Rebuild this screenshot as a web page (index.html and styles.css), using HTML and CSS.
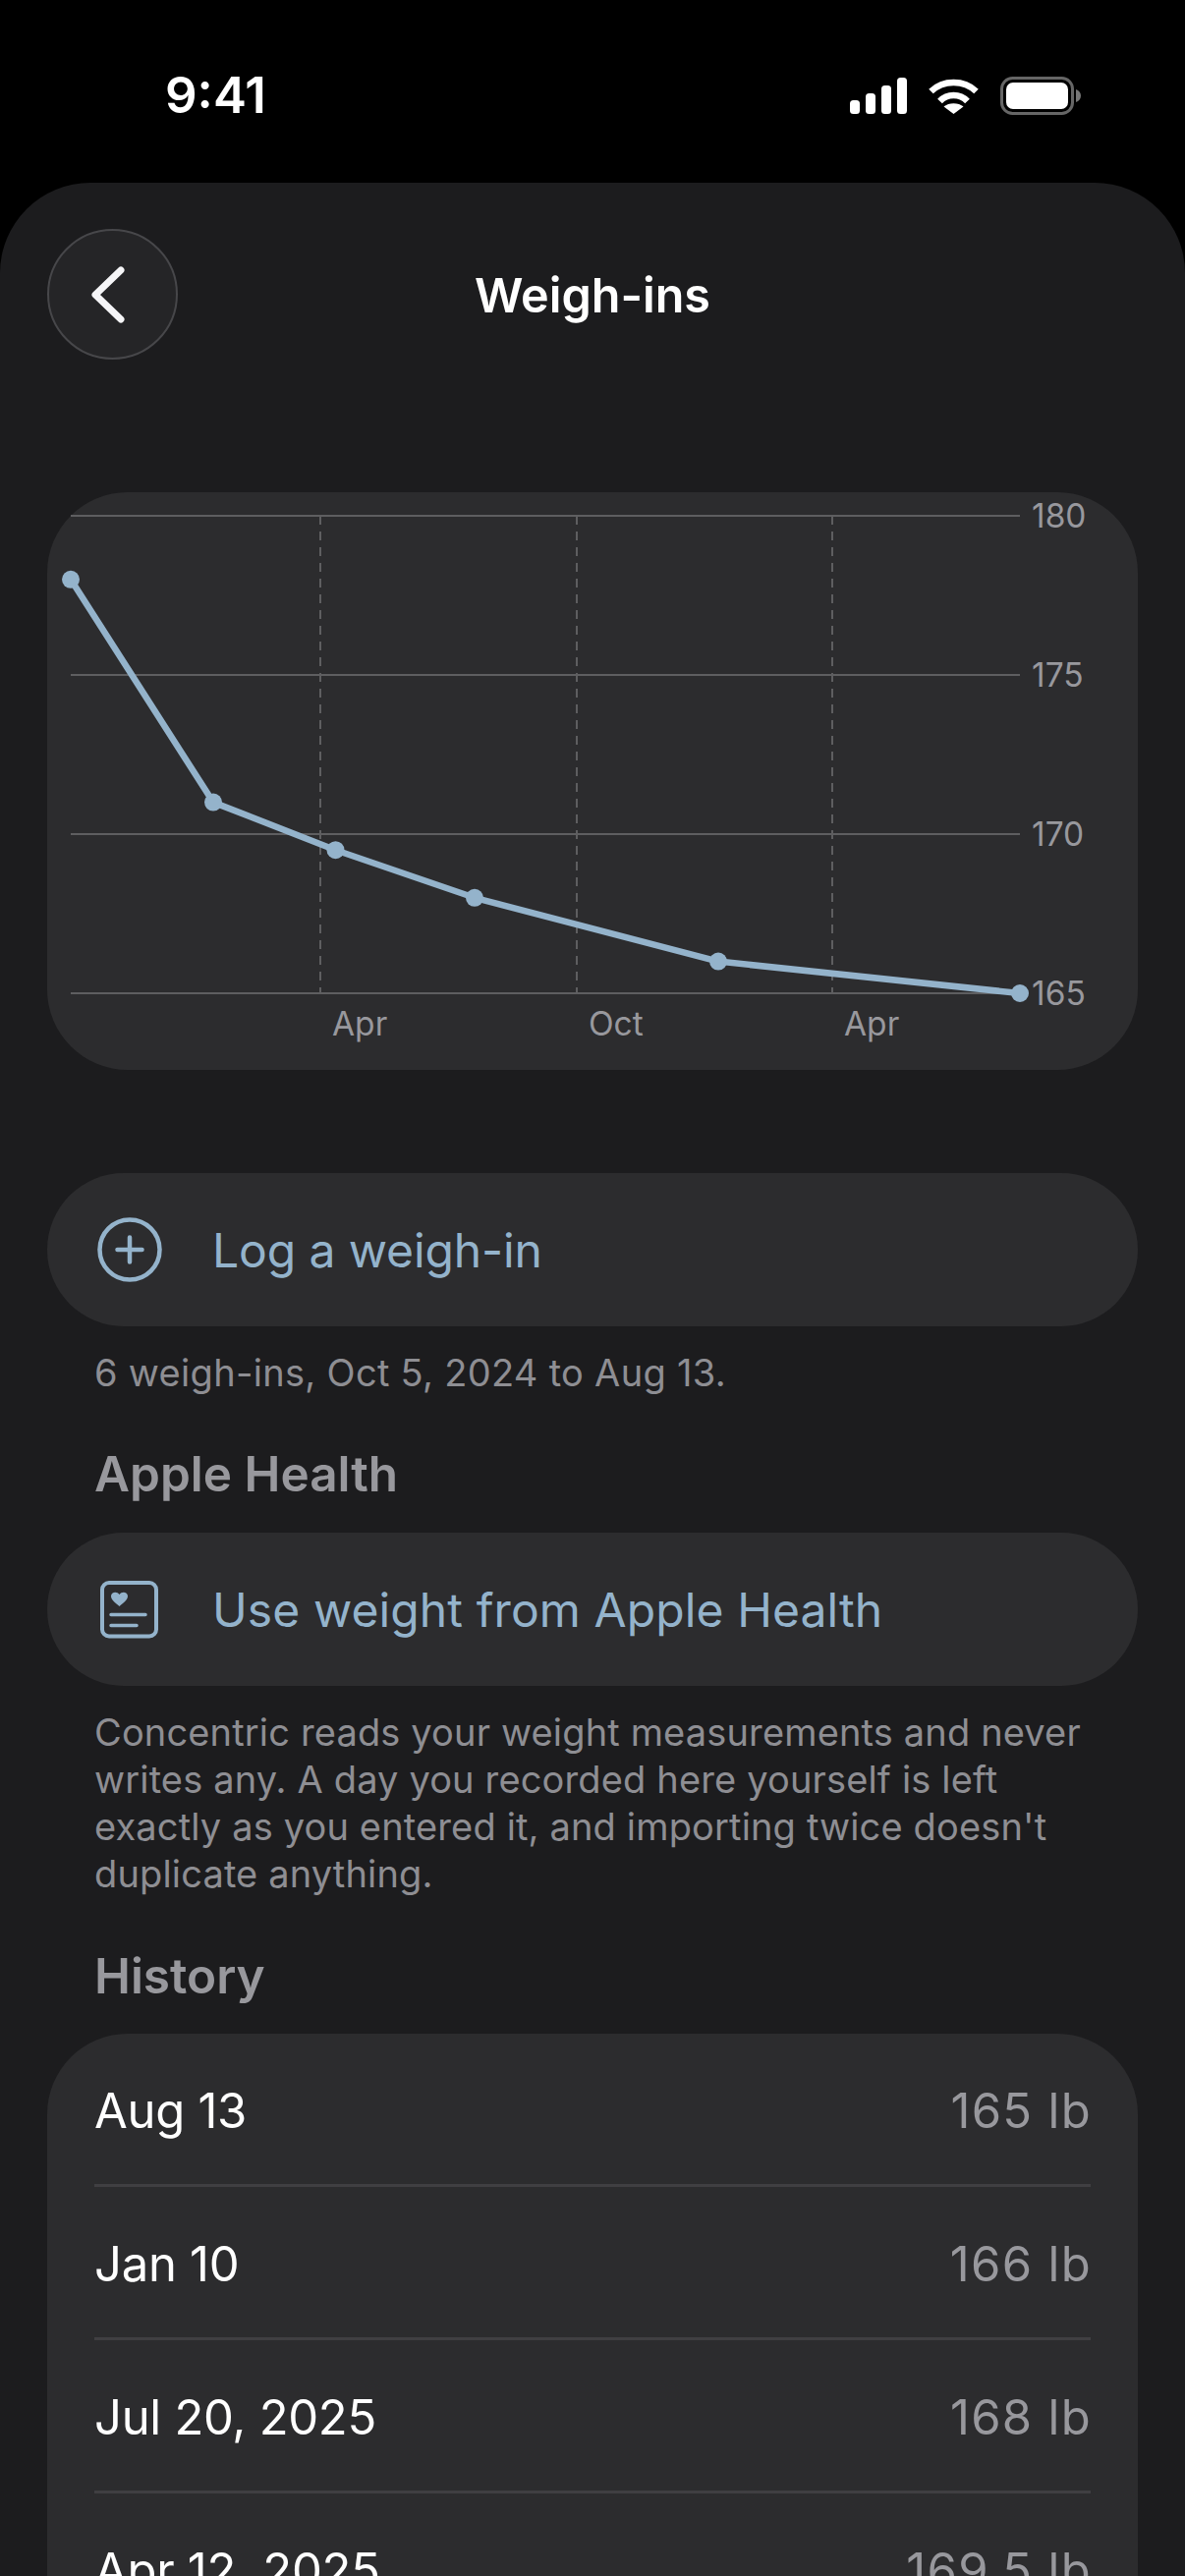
FILE: index.html
```html
<!DOCTYPE html>
<html lang="en">
<head>
<meta charset="utf-8">
<title>Weigh-ins</title>
<link rel="stylesheet" href="styles.css">
</head>
<body>
<div class="phone">
  <header class="status">
    <span class="time">9:41</span>
    <div class="status-icons">
      <svg class="ic-signal" width="58" height="37" viewBox="0 0 58 37" fill="#fff"><rect x="0" y="23" width="10" height="14" rx="3.500"/><rect x="16" y="16" width="10" height="21" rx="3.500"/><rect x="32" y="8" width="10" height="29" rx="3.500"/><rect x="48" y="0" width="10" height="37" rx="3.500"/></svg>
      <svg class="ic-wifi" width="51" height="37" viewBox="0 0 51 37" fill="none" stroke="#fff" stroke-width="6.500"><path d="M2.500 14C15 2 36 2 48.500 14"/><path d="M11.500 24C19 16 32 16 39.500 24"/><path d="M25.500 37L15.500 29.500C20.500 25 30.500 25 35.500 29.500Z" fill="#fff" stroke="none"/></svg>
      <svg class="ic-batt" width="82" height="39" viewBox="0 0 82 39" fill="none"><rect x="1.500" y="1.500" width="72" height="36" rx="11" stroke="#666" stroke-width="3"/><rect x="6" y="6" width="63" height="27" rx="7" fill="#fff"/><path d="M77 13C80 14 82 16.500 82 19.500C82 22.500 80 25 77 26Z" fill="#777"/></svg>
    </div>
  </header>
  <main class="sheet">
    <div class="nav">
      <button class="back" type="button" aria-label="Back">
        <svg width="40" height="60" viewBox="0 0 40 60" fill="none" stroke="#f5f5f7" stroke-width="7" stroke-linecap="round" stroke-linejoin="round"><path d="M33 5L7 30L33 55"/></svg>
      </button>
      <h1 class="title">Weigh-ins</h1>
    </div>

    <section class="chart-card">
      <svg class="chart-svg" width="1110" height="588" viewBox="0 0 1110 588" fill="none">
        <g stroke="#5e5e60" stroke-width="2" stroke-dasharray="9 7">
          <path d="M278 24V510"/><path d="M539 24V510"/><path d="M799 24V510"/>
        </g>
        <g stroke="#5e5e60" stroke-width="2">
          <path d="M24 24H990"/><path d="M24 186H990"/><path d="M24 348H990"/><path d="M24 510H990"/>
        </g>
        <path d="M24 88.800L169 315.600L293.500 364.200L435 412.800L683 477.600L990 510" stroke="#94b3cb" stroke-width="6.500" stroke-linejoin="round"/>
        <g fill="#94b3cb">
          <circle cx="24" cy="88.800" r="9"/><circle cx="169" cy="315.600" r="9"/><circle cx="293.500" cy="364.200" r="9"/><circle cx="435" cy="412.800" r="9"/><circle cx="683" cy="477.600" r="9"/><circle cx="990" cy="510" r="9"/>
        </g>
        <g class="axis">
          <text x="1002" y="36">180</text><text x="1002" y="198">175</text><text x="1002" y="360">170</text><text x="1002" y="522">165</text>
          <text x="290" y="553">Apr</text><text x="551" y="553">Oct</text><text x="811" y="553">Apr</text>
        </g>
      </svg>
    </section>

    <button class="action action-first" type="button">
      <svg class="action-ic" width="68" height="68" viewBox="0 0 68 68" fill="none" stroke="#94b3cb" stroke-width="4.500" stroke-linecap="round"><circle cx="34" cy="34" r="30.500"/><path d="M34 21.500V46.500M21.500 34H46.500"/></svg>
      <span>Log a weigh-in</span>
    </button>
    <p class="note note-one">6 weigh-ins, Oct 5, 2024 to Aug 13.</p>

    <h2 class="section">Apple Health</h2>
    <button class="action action-wide" type="button">
      <svg class="action-ic" width="68" height="68" viewBox="0 0 68 68" fill="none" stroke="#94b3cb" stroke-width="4" stroke-linecap="round"><rect x="6" y="7" width="55" height="54.500" rx="7"/><path d="M15 39.600H50M15 50.600H41" stroke-width="3.500"/><path d="M23.500 31C19 27 15 24.500 15 20.500C15 16.500 21 15 23.500 19C26 15 32 16.500 32 20.500C32 24.500 28 27 23.500 31Z" fill="#94b3cb" stroke="none"/></svg>
      <span>Use weight from Apple Health</span>
    </button>
    <p class="note note-two">Concentric reads your weight measurements and never writes any. A day you recorded here yourself is left exactly as you entered it, and importing twice doesn't duplicate anything.</p>

    <h2 class="section section-history">History</h2>
    <ul class="history">
      <li class="row"><span>Aug 13</span><span class="val">165 lb</span></li>
      <li class="row"><span>Jan 10</span><span class="val">166 lb</span></li>
      <li class="row"><span>Jul 20, 2025</span><span class="val">168 lb</span></li>
      <li class="row"><span>Apr 12, 2025</span><span class="val">169.5 lb</span></li>
    </ul>
  </main>
</div>
</body>
</html>
```

FILE: styles.css
```css
* { box-sizing: border-box; }
html, body { margin: 0; padding: 0; background: #000; }
body { font-family: Inter, "Noto Sans", "Liberation Sans", sans-serif; }
.phone { width: 1206px; height: 2622px; overflow: hidden; background: #000; display: flex; flex-direction: column; }
.status { height: 186px; flex: none; display: flex; justify-content: space-between; align-items: flex-start; padding: 69px 106px 0 168px; }
.time { color: #fff; font-size: 51px; font-weight: 600; line-height: 56px; }
.status-icons { display: flex; align-items: center; gap: 22px; padding-top: 9px; }
.sheet { flex: 1; background: #1c1c1e; border-radius: 92px 92px 0 0; padding: 47px 48px 0; }
.nav { display: flex; align-items: center; position: relative; height: 133px; }
.back { width: 133px; height: 133px; border-radius: 50%; background: #252527; border: 2px solid #47474a; padding: 0 10px 0 0; display: flex; align-items: center; justify-content: center; }
.title { position: absolute; left: 0; right: 0; text-align: center; margin: 0; color: #fff; font-size: 48.500px; line-height: 60px; font-weight: 600; padding-top: 2px; pointer-events: none; }
.chart-card { margin-top: 135px; height: 588px; border-radius: 82px; background: #2c2c2e; }
.chart-svg { display: block; }
.axis text { font-family: Inter, sans-serif; font-size: 33.500px; fill: #98989d; stroke: none; }
.action { width: 100%; height: 156px; border: 0; border-radius: 78px; background: #2c2c2e; display: flex; align-items: center; gap: 50px; padding: 0 0 0 50px; color: #94b3cb; font: inherit; font-size: 48px; text-align: left; }
.action-first { margin-top: 105px; letter-spacing: -.1px; }
.action-wide { letter-spacing: .1px; }
.note { margin: 0; padding: 0 48px; color: #8e8e93; font-size: 38px; line-height: 48px; }
.note-one { margin-top: 23px; letter-spacing: .3px; }
.note-two { margin-top: 23px; letter-spacing: .15px; }
.section { margin: 49px 0 30px; padding: 0 48px; color: #98989d; font-size: 49.500px; line-height: 60px; font-weight: 600; }
.section-history { margin: 50px 0 29px; }
.history { list-style: none; margin: 0; padding: 0 48px; background: #2c2c2e; border-radius: 82px 82px 0 0; }
.row { height: 156px; display: flex; align-items: center; justify-content: space-between; padding-top: 4px; color: #fff; font-size: 49px; letter-spacing: -.3px; border-bottom: 3px solid #403f42; }
.val { color: #98989d; letter-spacing: 1.300px; margin-right: -1px; }
```
